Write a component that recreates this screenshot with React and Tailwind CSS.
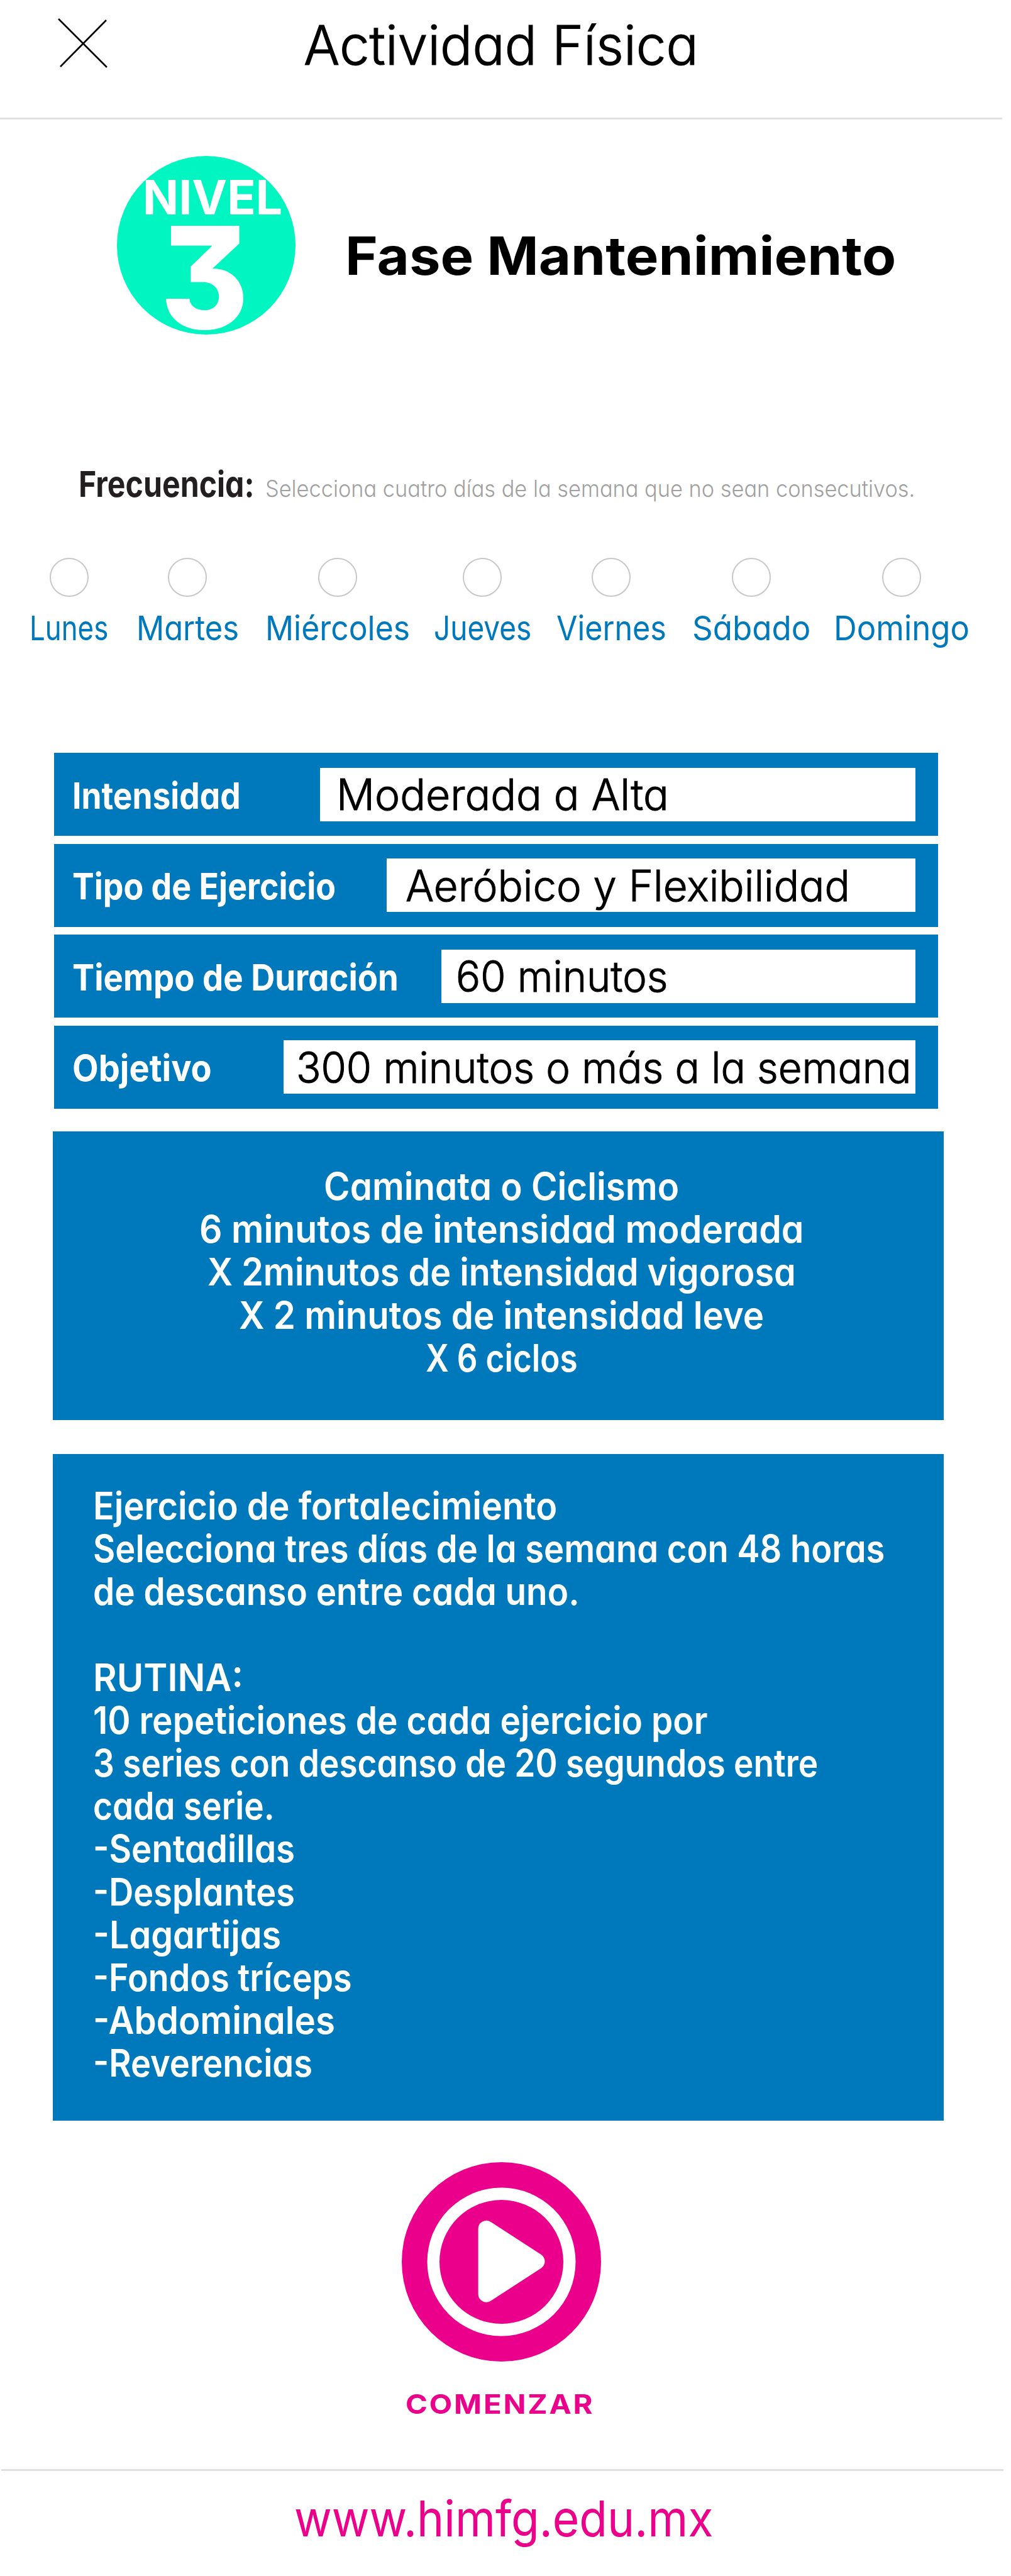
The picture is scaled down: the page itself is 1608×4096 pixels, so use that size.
import { useLayoutEffect, useRef, useState } from "react";

// Single line of text, condensed or widened to fill the given width.
function Fit({ width, className = "", children }) {
  const ref = useRef(null);
  const [scale, setScale] = useState(1);
  useLayoutEffect(() => {
    const measure = () => setScale(width / ref.current.offsetWidth);
    measure();
    document.fonts?.ready.then(() => ref.current && measure());
  }, [width, children]);
  return (
    <span className={`block whitespace-nowrap ${className}`} style={{ width }}>
      <span ref={ref} className="inline-block origin-left" style={{ transform: `scaleX(${scale})` }}>
        {children}
      </span>
    </span>
  );
}

const days = [
  ["Lunes", 125, ""],
  ["Martes", 163, "ml-[44.5px]"],
  ["Miércoles", 230, "ml-[42.5px]"],
  ["Jueves", 155, "ml-[37.5px]"],
  ["Viernes", 175, "ml-[40px]"],
  ["Sábado", 188, "ml-[41.5px]"],
  ["Domingo", 216, "ml-[37px]"],
];

const rows = [
  { label: "Intensidad", lw: 268, value: "Moderada a Alta", vw: 529, box: "w-[947px] pl-[26px]" },
  { label: "Tipo de Ejercicio", lw: 419, value: "Aeróbico y Flexibilidad", vw: 707, box: "w-[841px] pl-[30px]" },
  { label: "Tiempo de Duración", lw: 519, value: "60 minutos", vw: 337, box: "w-[754px] pl-[23px]" },
  { label: "Objetivo", lw: 222, value: "300 minutos o más a la semana", vw: 979, box: "w-[1005px] pl-[20px]" },
];

const cardio = [
  ["Caminata o Ciclismo", 565],
  ["6 minutos de intensidad moderada", 962],
  ["X 2minutos de intensidad vigorosa", 936],
  ["X 2 minutos de intensidad leve", 835],
  ["X 6 ciclos", 242],
];

const strength = [
  ["Ejercicio de fortalecimiento", 738],
  ["Selecciona tres días de la semana con 48 horas", 1259],
  ["de descanso entre cada uno.", 774],
  null,
  ["RUTINA:", 239],
  ["10 repeticiones de cada ejercicio por", 978],
  ["3 series con descanso de 20 segundos entre", 1153],
  ["cada serie.", 289],
  ["-Sentadillas", 321],
  ["-Desplantes", 321],
  ["-Lagartijas", 299],
  ["-Fondos tríceps", 412],
  ["-Abdominales", 385],
  ["-Reverencias", 349],
];

export default function App() {
  return (
    <div className="h-[4096px] w-[1608px] overflow-hidden bg-white font-['Inter',sans-serif] text-black [font-feature-settings:'cv11']">
      <header className="flex h-[190px] w-[1594px] items-start border-b-3 border-[#e0e0e0] pt-[29px] pl-[92px]">
        <svg width="80" height="80" viewBox="0 0 80 80" fill="none" stroke="black" strokeWidth="2.6">
          <path d="M1 1 78 78M77 3 4 77" />
        </svg>
        <h1 className="ml-[311px]">
          <Fit width={628} className="text-[86px] leading-[86px] font-light [-webkit-text-stroke:1.2px_black]">Actividad Física</Fit>
        </h1>
      </header>

      <section className="mt-[58px] ml-[186px] flex items-center">
        <div className="flex size-[284px] flex-col items-center rounded-full bg-[#00f5c0] pt-[27px] font-bold text-white [font-feature-settings:'cv09']">
          <Fit width={222} className="ml-[20px] text-[76px] leading-[76px]">NIVEL</Fit>
          <Fit width={141} className="ml-[-6px] text-[226px] leading-[180px] font-extrabold">3</Fit>
        </div>
        <h2 className="ml-[79px] pt-[34px] [font-feature-settings:normal]">
          <Fit width={876} className="text-[84px] leading-[84px] font-bold">Fase Mantenimiento</Fit>
        </h2>
      </section>

      <div className="mt-[209px] ml-[125px] flex h-[58px] items-baseline">
        <Fit width={280} className="text-[57px] leading-[58px] font-bold text-[#231f20]">Frecuencia:</Fit>
        <Fit width={1033} className="ml-[17px] text-[37px] leading-[58px] font-light text-[#a0a0a0]">
          Selecciona cuatro días de la semana que no sean consecutivos.
        </Fit>
      </div>

      <div className="mt-[88px] ml-[47px] flex text-[#0079bc]">
        {days.map(([d, w, gap]) => (
          <label key={d} className={`flex flex-col items-center ${gap}`}>
            <span className="size-[62px] rounded-full border-[2.5px] border-[#c8c8c9]" />
            <Fit width={w} className="mt-[23px] text-[54px] leading-[53px] font-normal">{d}</Fit>
          </label>
        ))}
      </div>

      <div className="mt-[172px] ml-[86px] grid w-[1406px] gap-[12.6px]">
        {rows.map((r) => (
          <div key={r.label} className="flex h-[132px] items-center justify-between bg-[#0079bc] pr-[36px] pl-[29px]">
            <Fit width={r.lw} className="pt-[3px] text-[58px] leading-[58px] font-bold text-white">{r.label}</Fit>
            <div className={`flex h-[85px] items-center bg-white ${r.box}`}>
              <Fit width={r.vw} className="text-[68px] leading-[68px] font-light [-webkit-text-stroke:1px_black]">{r.value}</Fit>
            </div>
          </div>
        ))}
      </div>

      <section className="mt-[36px] ml-[84px] flex h-[459px] w-[1417px] flex-col items-center bg-[#0079bc] pt-[53px] pl-[10px] text-[60px] leading-[68.3px] font-semibold text-white">
        {cardio.map(([t, w]) => (
          <Fit key={t} width={w}>{t}</Fit>
        ))}
      </section>

      <section className="mt-[54px] ml-[84px] h-[1060px] w-[1417px] bg-[#0079bc] pt-[48px] pl-[64px] text-[60px] leading-[68.2px] font-semibold text-white">
        {strength.map((l, i) =>
          l ? <Fit key={i} width={l[1]}>{l[0]}</Fit> : <div key={i} className="h-[68.2px]" />
        )}
      </section>

      <button className="mt-[66px] ml-[639px] flex flex-col items-center text-[#eb008b]">
        <svg width="317" height="317" viewBox="0 0 317 317">
          <circle cx="158.5" cy="158.5" r="158.5" fill="currentColor" />
          <circle cx="158.5" cy="158.5" r="118" fill="white" />
          <circle cx="158.5" cy="158.5" r="98.5" fill="currentColor" />
          <path
            fill="white"
            d="M121.600 105.900A13 13 0 0 1 142.400 95.500L221.800 147A13 13 0 0 1 221.800 168.500L142.400 220A13 13 0 0 1 121.600 209.600Z"
          />
        </svg>
        <Fit width={300} className="mt-[45px] ml-[-6px] text-left text-[43px] leading-[44px] font-bold tracking-[0.06em]">COMENZAR</Fit>
      </button>

      <footer className="mt-[82px] ml-[2px] w-[1594px] border-t-3 border-[#e0e0e0] pt-[37px] pl-[466px]">
        <Fit width={666} className="text-[79px] leading-[76px] text-[#eb008b]">www.himfg.edu.mx</Fit>
      </footer>
    </div>
  );
}
